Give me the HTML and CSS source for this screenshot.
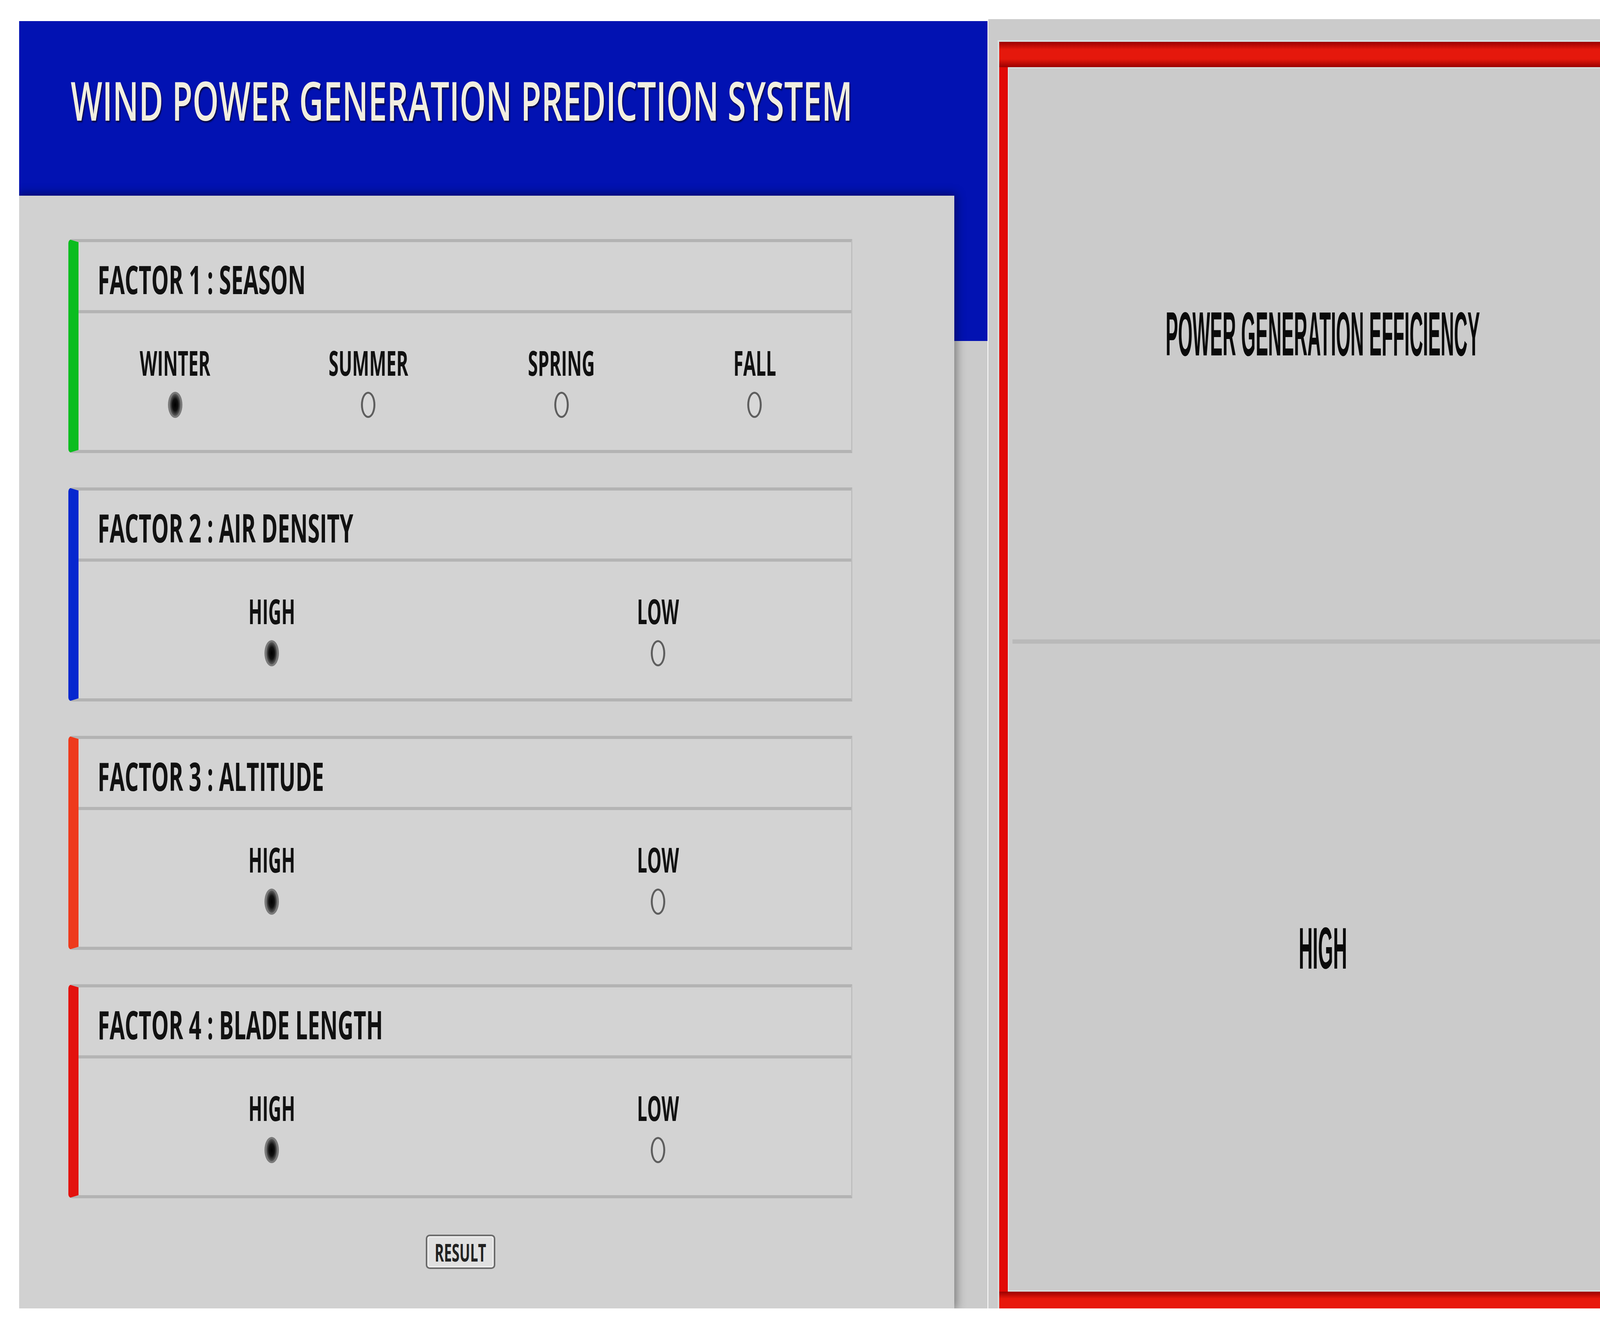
FILE: index.html
```html
<!DOCTYPE html>
<html lang="en">
<head>
<meta charset="utf-8">
<title>Wind Power Generation Prediction System</title>
<link rel="stylesheet" href="styles.css">
</head>
<body>
<div class="page">
  <section class="left">
    <header class="banner">
      <h1 class="title"><span class="sx">WIND POWER GENERATION PREDICTION SYSTEM</span></h1>
    </header>
    <main class="panel">
      <div class="card c-green">
        <div class="card-head"><span class="sx">FACTOR 1 : SEASON</span></div>
        <div class="card-body">
          <label class="opt"><span class="opt-label">WINTER</span><input class="radio" type="radio" name="season" checked></label>
          <label class="opt"><span class="opt-label">SUMMER</span><input class="radio" type="radio" name="season"></label>
          <label class="opt"><span class="opt-label">SPRING</span><input class="radio" type="radio" name="season"></label>
          <label class="opt"><span class="opt-label">FALL</span><input class="radio" type="radio" name="season"></label>
        </div>
      </div>
      <div class="card c-blue">
        <div class="card-head"><span class="sx">FACTOR 2 : AIR DENSITY</span></div>
        <div class="card-body">
          <label class="opt"><span class="opt-label">HIGH</span><input class="radio" type="radio" name="air" checked></label>
          <label class="opt"><span class="opt-label">LOW</span><input class="radio" type="radio" name="air"></label>
        </div>
      </div>
      <div class="card c-orange">
        <div class="card-head"><span class="sx">FACTOR 3 : ALTITUDE</span></div>
        <div class="card-body">
          <label class="opt"><span class="opt-label">HIGH</span><input class="radio" type="radio" name="alt" checked></label>
          <label class="opt"><span class="opt-label">LOW</span><input class="radio" type="radio" name="alt"></label>
        </div>
      </div>
      <div class="card c-red">
        <div class="card-head"><span class="sx">FACTOR 4 : BLADE LENGTH</span></div>
        <div class="card-body">
          <label class="opt"><span class="opt-label">HIGH</span><input class="radio" type="radio" name="blade" checked></label>
          <label class="opt"><span class="opt-label">LOW</span><input class="radio" type="radio" name="blade"></label>
        </div>
      </div>
      <div class="actions">
        <button class="result-btn" type="button"><span>RESULT</span></button>
      </div>
    </main>
  </section>
  <section class="right">
    <div class="result-box">
      <div class="result-inner">
        <div class="result-sec sec-top"><span class="big">POWER GENERATION EFFICIENCY</span></div>
        <div class="result-divider"></div>
        <div class="result-sec sec-bottom"><span class="big big-value">HIGH</span></div>
      </div>
    </div>
  </section>
</div>
</body>
</html>
```

FILE: styles.css
```css
html, body {
  margin: 0;
  padding: 0;
  background: #ffffff;
}

body {
  width: 4251px;
  height: 3395px;
  overflow: hidden;
  font-family: "Open Sans", "Liberation Sans", sans-serif;
}

.page {
  display: flex;
  align-items: flex-start;
  gap: 2px;
  padding-left: 49px;
  width: 4251px;
  box-sizing: border-box;
}

/* ---------- left side ---------- */
.left {
  flex: none;
  margin-top: 54px;
  width: 2479px;
  height: 3296px;
  background: #cbcbcb;
  overflow: hidden;
  display: flex;
  flex-direction: column;
}

.banner {
  flex: none;
  height: 819px;
  box-sizing: border-box;
  padding: 109px 0 0 132px;
  background: #0212b2;
  overflow: hidden;
}

.title {
  margin: 0;
  font-size: 137px;
  font-weight: 600;
  line-height: 1.362;
  color: #f1eee0;
  white-space: nowrap;
  text-shadow: 3px 4px 4px rgba(0, 0, 40, 0.85);
}

.title .sx {
  display: inline-block;
  transform: scaleX(0.625);
  transform-origin: 0 50%;
}

.panel {
  position: relative;
  z-index: 1;
  flex: 1;
  margin-top: -372px;
  width: 2394px;
  box-sizing: border-box;
  padding: 111px 261px 0 126px;
  background: #d1d1d1;
  box-shadow: 0 0 24px 4px rgba(0, 0, 0, 0.45);
  display: flex;
  flex-direction: column;
  gap: 88px;
}

.card {
  height: 548px;
  box-sizing: border-box;
  background: #d3d3d3;
  border-top: 8px solid #b3b3b3;
  border-bottom: 8px solid #b3b3b3;
  border-right: 3px solid #bdbdbd;
  border-left: 26px solid #0bbd1f;
  border-radius: 10px 0 0 10px;
  display: flex;
  flex-direction: column;
}

.c-green { border-left-color: #0bbd1f; }
.c-blue { border-left-color: #0627cf; }
.c-orange { border-left-color: #ee3a1c; }
.c-red { border-left-color: #e3120e; }

.card-head {
  flex: none;
  height: 182px;
  box-sizing: border-box;
  padding: 26px 0 0 49px;
  border-bottom: 8px solid #b4b4b4;
  font-size: 100px;
  font-weight: 700;
  line-height: 1.362;
  color: #111111;
  white-space: nowrap;
}

.card-head .sx {
  display: inline-block;
  transform: scaleX(0.56);
  transform-origin: 0 50%;
}

.card-body {
  flex: 1;
  display: flex;
  padding-top: 67px;
}

.opt {
  flex: 1;
  min-width: 0;
  display: flex;
  flex-direction: column;
  align-items: center;
}

.opt-label {
  display: inline-block;
  font-size: 88px;
  font-weight: 700;
  line-height: 1.362;
  color: #111111;
  white-space: nowrap;
  transform: scaleX(0.525);
}

.radio {
  appearance: none;
  -webkit-appearance: none;
  margin: 14px 0 0 0;
  width: 37px;
  height: 67px;
  box-sizing: border-box;
  border: 5px solid #5e5e5e;
  border-radius: 50%;
  background: #d8d8d8;
}

.radio:checked {
  border-color: #7a7a7a;
  background: radial-gradient(ellipse at center, #000000 0, #111111 38%, #6a6a6a 75%);
}

.actions {
  display: flex;
  justify-content: center;
  margin-top: 5px;
}

.result-btn {
  width: 178px;
  height: 88px;
  padding: 0;
  box-sizing: border-box;
  border: 4px solid #6b6b6b;
  border-radius: 10px;
  background: #e0e0e0;
  box-shadow: inset 0 0 0 3px #f0f0f0;
  font-family: "Open Sans", "Liberation Sans", sans-serif;
  font-size: 63px;
  font-weight: 700;
  line-height: 1;
  color: #222222;
  display: flex;
  align-items: center;
  justify-content: center;
}

.result-btn span {
  display: inline-block;
  transform: scaleX(0.57);
  white-space: nowrap;
}

/* ---------- right side ---------- */
.right {
  flex: none;
  margin-top: 49px;
  width: 1694px;
  height: 3301px;
  box-sizing: border-box;
  padding: 58px 10px 0 28px;
  background: #cbcbcb;
  display: flex;
  overflow: hidden;
}

.result-box {
  flex: 1;
  min-width: 0;
  box-sizing: border-box;
  padding: 65px 22px 43px 22px;
  background:
    linear-gradient(to bottom, #9a0000 0, #e5180c 20px, #e5180c 44px, #9a0000 65px) top / 100% 65px no-repeat,
    linear-gradient(to bottom, #9a0000 0, #e8180c 18px) bottom / 100% 43px no-repeat,
    #e20a06;
  box-shadow: 0 0 0 4px #d6e1e1;
  display: flex;
}

.result-inner {
  flex: 1;
  min-width: 0;
  background: #cbcbcb;
  box-shadow: inset 0 0 0 3px #d9e1e1;
  display: flex;
  flex-direction: column;
}

.result-sec {
  min-width: 0;
  display: flex;
  align-items: center;
  justify-content: center;
  box-sizing: border-box;
  padding-bottom: 98px;
}

.sec-top {
  flex: none;
  height: 1465px;
}

.sec-bottom {
  flex: 1;
}

.result-divider {
  flex: none;
  height: 11px;
  margin: 0 12px;
  background: #b9b9b9;
}

.big {
  flex: none;
  display: inline-block;
  font-family: "Liberation Sans", Arial, sans-serif;
  font-size: 159px;
  font-weight: 700;
  line-height: 1.15;
  color: #0a0a0a;
  white-space: nowrap;
  transform: scaleX(0.30);
}

.big-value {
  font-size: 150px;
  transform: scaleX(0.33);
}
```
